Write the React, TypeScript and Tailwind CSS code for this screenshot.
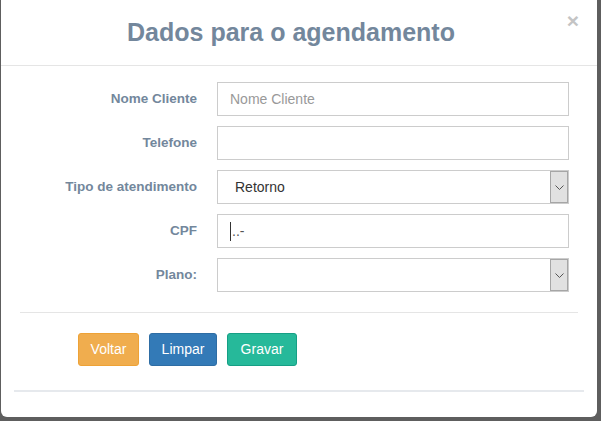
import React from "react";

const font = { fontFamily: '"Liberation Sans", Arial, sans-serif' };

const Label: React.FC<{ text: string }> = ({ text }) => (
  <label className="w-[196px] shrink-0 text-right text-[13.5px] font-bold text-[#73879C]">{text}</label>
);

const SelectBox: React.FC<{ value?: string }> = ({ value }) => (
  <div className="ml-[20px] flex h-[34px] w-[352px] items-stretch border border-[#ccc] bg-white">
    <div className="flex flex-1 items-center pl-[17px] text-[14px] text-[#333]">{value}</div>
    <div className="flex w-[18px] items-center justify-center border border-[#a6a6a6] bg-[#e1e1e1]">
      <svg width="9" height="5" viewBox="0 0 9 5" fill="none">
        <path d="M0.5 0.5 L4.5 4.5 L8.5 0.5" stroke="#555" strokeWidth="1" />
      </svg>
    </div>
  </div>
);

const TextBox: React.FC<{ placeholder?: string; children?: React.ReactNode }> = ({ placeholder, children }) => (
  <div className="ml-[20px] flex h-[34px] w-[352px] items-center border border-[#ccc] bg-white px-[12px] text-[14px]">
    {placeholder ? <span className="text-[#999]">{placeholder}</span> : children}
  </div>
);

export default function App() {
  return (
    <div style={font} className="h-[421px] w-[601px] overflow-hidden bg-[#5e5e5e]">
      <div className="relative ml-[1px] flex h-[417px] w-[596px] flex-col rounded-b-[6px] bg-white">
        {/* header */}
        <div className="flex h-[66px] shrink-0 justify-center border-b border-[#e5e5e5] pr-[16px] pt-[17px]">
          <h4 className="text-[25px] font-bold leading-[30px] text-[#73879C]">Dados para o agendamento</h4>
        </div>
        <button className="absolute right-[18px] top-[10px] text-[21px] font-bold leading-[21px] text-[#c4c4c4]">×</button>

        {/* form */}
        <div className="flex flex-col gap-[10px] pt-[16px]">
          <div className="flex items-center">
            <Label text="Nome Cliente" />
            <TextBox placeholder="Nome Cliente" />
          </div>
          <div className="flex items-center">
            <Label text="Telefone" />
            <TextBox />
          </div>
          <div className="flex items-center">
            <Label text="Tipo de atendimento" />
            <SelectBox value="Retorno" />
          </div>
          <div className="flex items-center">
            <Label text="CPF" />
            <TextBox>
              <span className="h-[19px] w-[1px] bg-[#333]" />
              <span className="ml-[1px] text-[#555]">..-</span>
            </TextBox>
          </div>
          <div className="flex items-center">
            <Label text="Plano:" />
            <SelectBox />
          </div>
        </div>

        <div className="ml-[19px] mr-[19px] mt-[20px] h-[1px] bg-[#e5e5e5]" />

        <div className="mt-[20px] flex gap-[10px] pl-[77px]">
          <button className="h-[33px] w-[61px] rounded-[3px] border border-[#eea236] bg-[#f0ad4e] text-[14px] text-white">Voltar</button>
          <button className="h-[33px] w-[68px] rounded-[3px] border border-[#2e6da4] bg-[#337ab7] text-[14px] text-white">Limpar</button>
          <button className="h-[33px] w-[70px] rounded-[3px] border border-[#169F85] bg-[#26B99A] text-[14px] text-white">Gravar</button>
        </div>

        <div className="ml-[13px] mr-[13px] mt-[24px] h-[2px] bg-[#e6e9ed]" />
      </div>
    </div>
  );
}
